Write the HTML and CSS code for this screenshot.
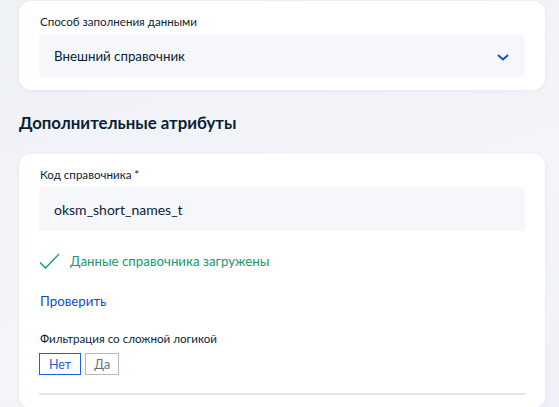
FILE: index.html
```html
<!DOCTYPE html>
<html lang="ru">
<head>
    <meta charset="UTF-8">
    <meta name="viewport" content="width=device-width, initial-scale=1.0">
    <link rel="stylesheet" href="styles.css">
    <title>Атрибуты справочника</title>
</head>
<body>
    <div class="page">
        <div class="card card-top">
            <div class="label">Способ заполнения данными</div>
            <div class="select">
                <span>Внешний справочник</span>
                <svg class="chevron" width="12" height="7" viewBox="0 0 12 7">
                    <path d="M1 1l5 4.5L11 1" fill="none" stroke="#0d4cd3" stroke-width="2"/>
                </svg>
            </div>
        </div>

        <h2 class="section-title">Дополнительные атрибуты</h2>

        <div class="card card-main">
            <div class="label">Код справочника *</div>
            <div class="input">oksm_short_names_t</div>

            <div class="status">
                <svg width="21" height="16" viewBox="0 0 21 16">
                    <path d="M1 9.5l5.5 5.5L20 1" fill="none" stroke="#169a72" stroke-width="1.3"/>
                </svg>
                <span>Данные справочника загружены</span>
            </div>

            <a class="link" href="#">Проверить</a>

            <div class="label label-filter">Фильтрация со сложной логикой</div>
            <div class="toggle">
                <button class="toggle-btn active">Нет</button>
                <button class="toggle-btn">Да</button>
            </div>

            <div class="divider"></div>
        </div>
    </div>
</body>
</html>
```

FILE: styles.css
```css
body {
    margin: 0;
    font-family: 'Lato', 'Roboto', sans-serif;
    color: #0b1f33;
    background: linear-gradient(160deg, #eef1f6 0%, #f3f5f9 60%, #eef2f8 100%);
    height: 407px;
    overflow: hidden;
}

.page {
    padding: 1px 14px 0 19px;
}

.card {
    background-color: #fff;
    border-radius: 12px;
    padding: 13px 20px 0 20px;
    box-shadow: 0 1px 4px rgba(11, 31, 51, 0.06);
}

.card-top {
    padding-bottom: 13px;
}

.card-main {
    padding-bottom: 13px;
}

.label {
    font-size: 11.6px;
    line-height: 16px;
    height: 16px;
    margin-left: 1px;
}

.select {
    margin-top: 4px;
    height: 43px;
    background-color: #f5f7fb;
    border-radius: 4px;
    display: flex;
    align-items: center;
    justify-content: space-between;
    padding: 0 16px 0 15px;
    font-size: 13.3px;
}

.chevron {
    margin-top: 3px;
}

.section-title {
    margin: 21px 0 19px 0;
    font-size: 16.8px;
    line-height: 24px;
    font-weight: 700;
}

.input {
    margin-top: 4px;
    height: 44px;
    background-color: #f5f7fb;
    border-radius: 4px;
    display: flex;
    align-items: center;
    padding: 0 15px;
    font-size: 14px;
}

.status {
    margin-top: 21px;
    display: flex;
    align-items: center;
    gap: 10px;
    font-size: 13.3px;
    color: #169a72;
    height: 17px;
}

.link {
    display: block;
    margin-top: 23px;
    font-size: 13.3px;
    line-height: 18px;
    color: #0d4cd3;
    text-decoration: none;
    margin-left: 1px;
}

.label-filter {
    margin-top: 21px;
}

.toggle {
    display: flex;
    gap: 4px;
    margin-top: 6px;
}

.toggle-btn {
    height: 22px;
    padding: 0 8px;
    font-family: inherit;
    font-size: 12.5px;
    font-weight: 400;
    background-color: #fff;
    border: 1px solid #b0bac5;
    color: #66727f;
    cursor: pointer;
}

.toggle-btn.active {
    border-color: #1d5deb;
    color: #1d5deb;
    padding: 0 9px;
}

.divider {
    margin-top: 18px;
    height: 2px;
    background-color: #e4e7eb;
}
```
